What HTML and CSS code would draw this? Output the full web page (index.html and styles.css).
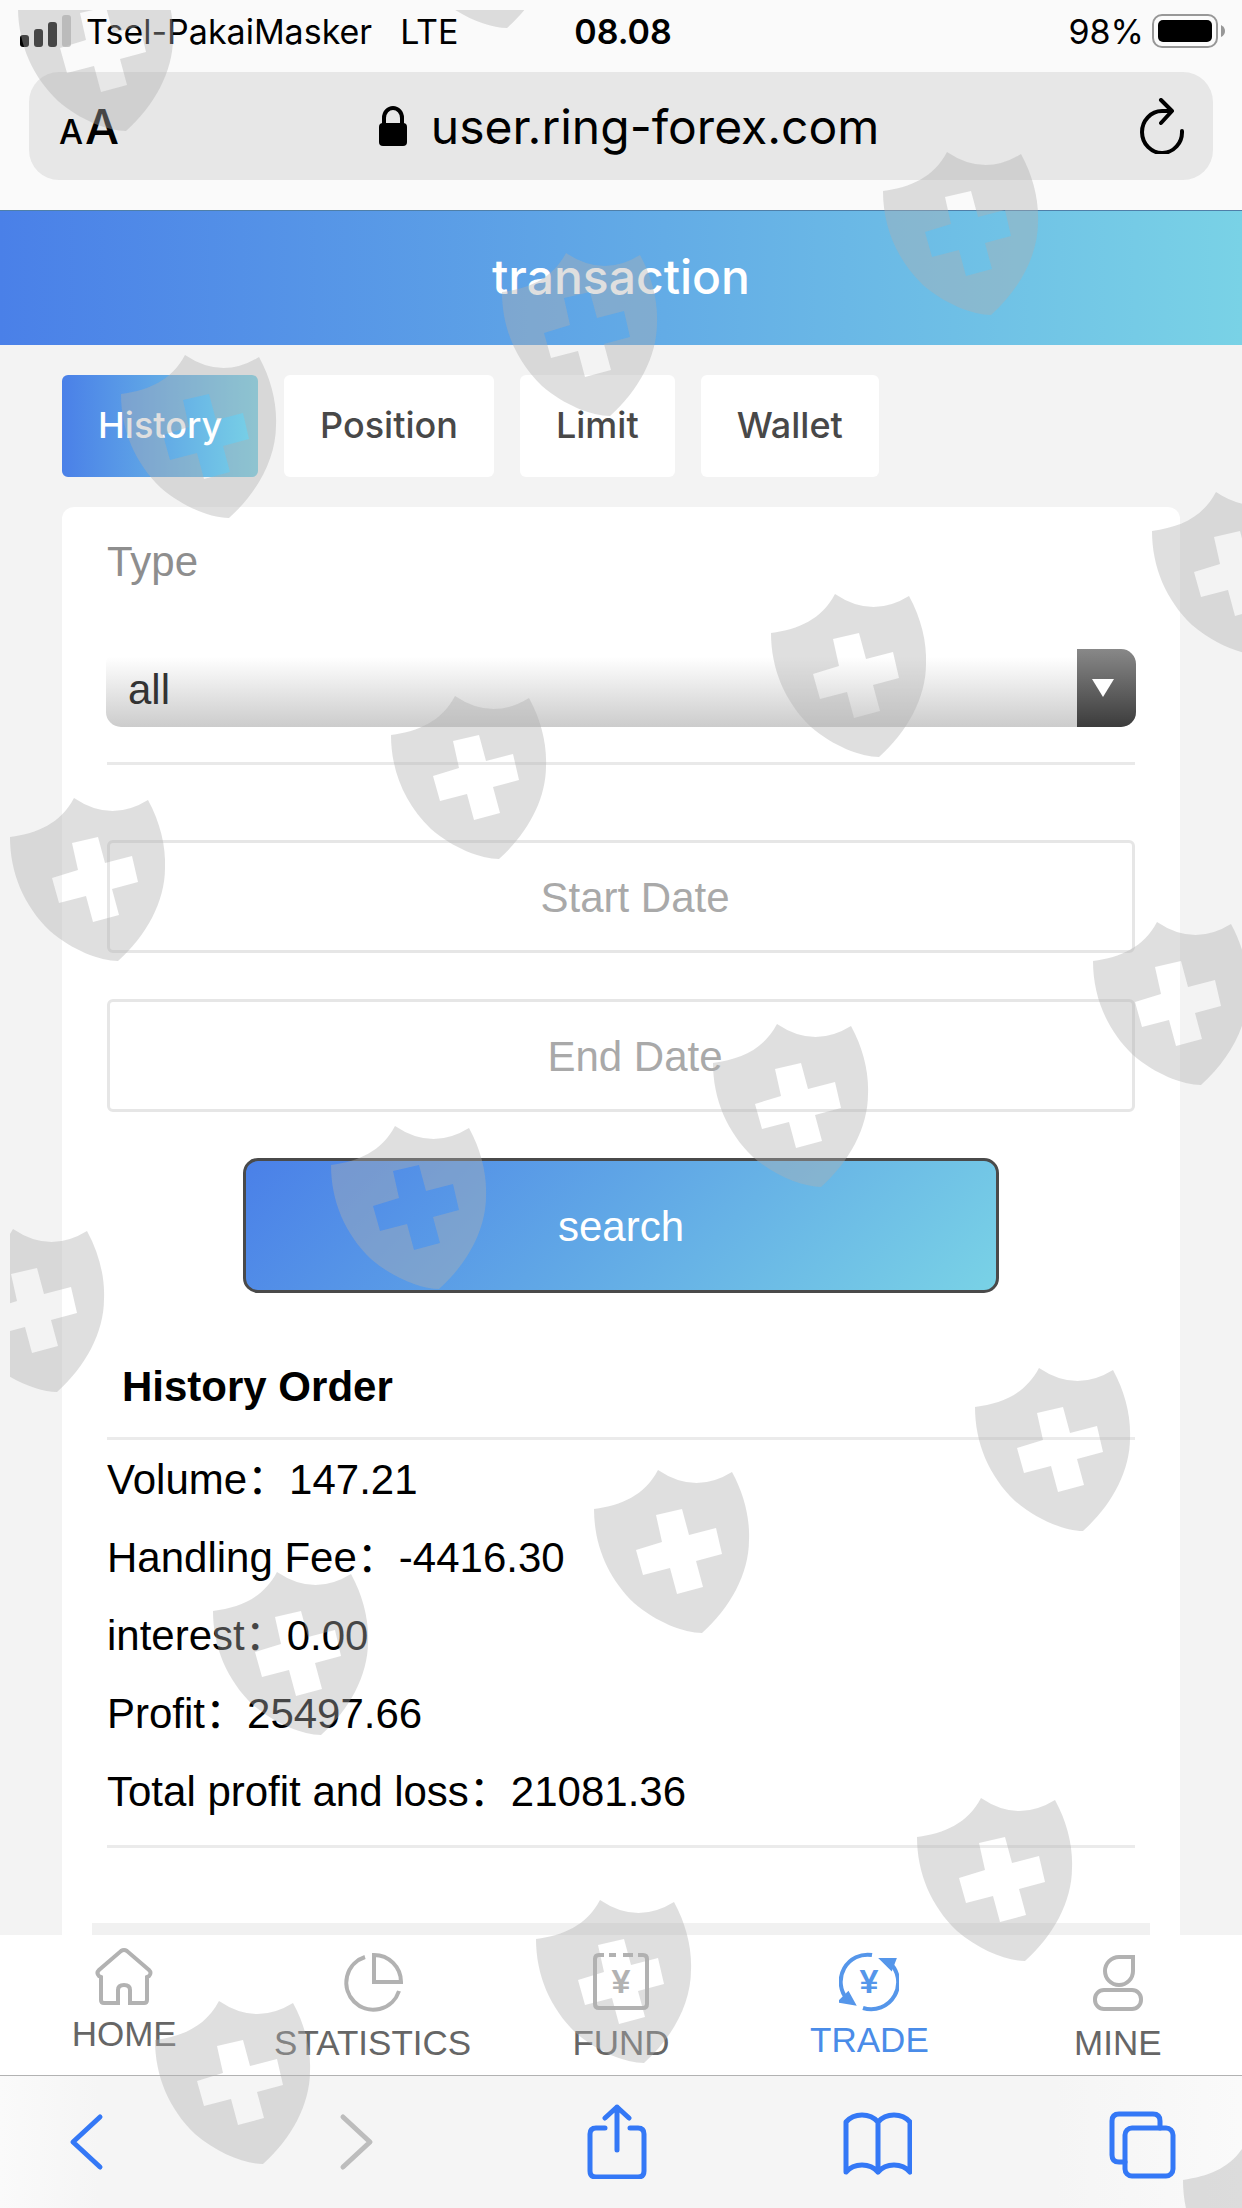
FILE: index.html
```html
<!DOCTYPE html>
<html lang="en">
<head>
    <meta charset="UTF-8">
    <meta name="viewport" content="width=device-width, initial-scale=1.0">
    <title>transaction</title>
    <link rel="stylesheet" href="styles.css">
</head>
<body>

    <header class="browser-top">
        <div class="status-bar">
            <div class="status-left">
                <svg class="signal" viewBox="0 0 52 32">
                    <rect x="0" y="20" width="9" height="12" rx="3"/>
                    <rect x="14" y="14" width="9" height="18" rx="3"/>
                    <rect x="28" y="7" width="9" height="25" rx="3"/>
                    <rect x="42" y="0" width="9" height="32" rx="3" fill="#c4c4c4"/>
                </svg>
                <span>Tsel-PakaiMasker</span>
                <span class="network">LTE</span>
            </div>
            <div class="status-time">08.08</div>
            <div class="status-right">
                <span>98%</span>
                <svg class="battery" viewBox="0 0 74 34">
                    <rect x="1" y="1" width="64" height="32" rx="9" fill="none" stroke="#979797" stroke-width="2"/>
                    <rect x="6" y="6" width="54" height="22" rx="5"/>
                    <path d="M69 11q4 2 4 6t-4 6z" fill="#979797"/>
                </svg>
            </div>
        </div>

        <div class="address-bar">
            <button class="text-size" aria-label="Text size"><span class="small-a">A</span><span>A</span></button>
            <div class="address">
                <svg class="lock" viewBox="0 0 28 40">
                    <rect x="0" y="17" width="28" height="23" rx="4"/>
                    <path d="M5 19V12a9 10 0 0 1 18 0v7" fill="none" stroke="#000" stroke-width="4"/>
                </svg>
                <span>user.ring-forex.com</span>
            </div>
            <button class="reload" aria-label="Reload">
                <svg viewBox="0 0 46 56">
                    <path d="M43 33A20 21 0 1 1 23 13h9M22 2l11 11-11 12" fill="none" stroke="#000" stroke-width="4" stroke-linecap="round" stroke-linejoin="round"/>
                </svg>
            </button>
        </div>
    </header>

    <h1 class="title">transaction</h1>

    <main class="content">
        <div class="tabs">
            <button class="tab active">History</button>
            <button class="tab">Position</button>
            <button class="tab">Limit</button>
            <button class="tab">Wallet</button>
        </div>

        <div class="card">
            <form class="filter" onsubmit="return false">
                <label class="type-label" for="type">Type</label>
                <div class="select-wrap">
                    <select id="type">
                        <option>all</option>
                    </select>
                    <span class="select-arrow"></span>
                </div>
                <input class="date" type="text" placeholder="Start Date" aria-label="Start Date">
                <input class="date" type="text" placeholder="End Date" aria-label="End Date">
                <button class="search-btn">search</button>
            </form>

            <h2 class="order-title">History Order</h2>
            <ul class="totals">
                <li>Volume：147.21</li>
                <li>Handling Fee：-4416.30</li>
                <li>interest：0.00</li>
                <li>Profit：25497.66</li>
                <li>Total profit and loss：21081.36</li>
            </ul>
            <div class="list-divider"></div>
        </div>
    </main>

    <nav class="menu">
        <a class="menu-item" href="#home">
            <svg class="home-icon" viewBox="0 0 60 60">
                <path d="M7 30v23q0 3 3 3h14V43q0-5 6-5t6 5v13h14q3 0 3-3V30l2-1q3-3 0-6L33 4q-3-2-6 0L5 23q-3 3 0 6z"/>
            </svg>
            <span>HOME</span>
        </a>
        <a class="menu-item" href="#statistics">
            <svg viewBox="0 0 60 69">
                <path d="M22 10A27 27 0 1 0 56 44M31 8v27h27A27 27 0 0 0 31 8z"/>
            </svg>
            <span>STATISTICS</span>
        </a>
        <a class="menu-item" href="#fund">
            <svg viewBox="0 0 60 69">
                <path d="M13 8H8q-4 0-4 4v45q0 4 4 4h44q4 0 4-4V12q0-4-4-4h-5M18 8h7M32 8h10"/>
                <text x="30" y="46">¥</text>
            </svg>
            <span>FUND</span>
        </a>
        <a class="menu-item current" href="#trade">
            <svg class="trade-icon" viewBox="0 0 60 66">
                <path d="M33 8A27 27 0 0 0 8 52M24 61A27 27 0 0 0 50 15"/>
                <path class="solid" d="M2 54l7-7 5 9zM44 13h11l-3 8z"/>
                <text x="30" y="46">¥</text>
            </svg>
            <span>TRADE</span>
        </a>
        <a class="menu-item" href="#mine">
            <svg viewBox="0 0 60 69">
                <path d="M31 10h14v14a14 14 0 1 1-14-14z"/>
                <rect x="7" y="43" width="46" height="19" rx="9"/>
            </svg>
            <span>MINE</span>
        </a>
    </nav>

    <div class="toolbar">
        <button aria-label="Back">
            <svg viewBox="0 0 70 76"><path d="M49 14L22 39l27 25"/></svg>
        </button>
        <button aria-label="Forward" disabled>
            <svg viewBox="0 0 70 76"><path d="M28 14l27 25-27 25"/></svg>
        </button>
        <button aria-label="Share">
            <svg viewBox="0 0 70 76"><path d="M26 25H17q-6 0-6 6v37q0 6 6 6h42q6 0 6-6V31q0-6-6-6h-8M38 47V4M26 15L38 4l12 11"/></svg>
        </button>
        <button aria-label="Bookmarks">
            <svg viewBox="0 0 70 76"><path d="M36 19q-6-7-16-7t-16 7v50q6-7 16-7t16 7q6-7 16-7t16 7V19q-6-7-16-7t-16 7v50"/></svg>
        </button>
        <button aria-label="Tabs">
            <svg viewBox="0 0 70 76"><rect x="19" y="25" width="48" height="48" rx="7"/><path d="M19 59h-6q-7 0-7-7V18q0-7 7-7h34q7 0 7 7v7"/></svg>
        </button>
    </div>

    <!-- watermark over the whole screen -->
    <svg class="watermark" viewBox="0 0 1242 2208" preserveAspectRatio="xMinYMin slice" aria-hidden="true">
        <defs>
            <path id="shield" fill-rule="evenodd" d="M64 0Q101 25 138 2C150 24 156 48 155 70C155 104 136 138 108 163C90 163 62 152 40 133C14 108 0 75 0 39C28 35 50 26 64 0zM62 45l6 27-26 8 7 25 27-7 7 26 26-7-7-26 26-7-6-26-27 7-7-26z"/>
            <clipPath id="area"><rect x="10" y="10" width="1232" height="2198"/></clipPath>
        </defs>
        <g clip-path="url(#area)">
            <use href="#shield" x="18" y="-32"/>
            <use href="#shield" x="399" y="-135"/>
            <use href="#shield" x="121" y="355"/>
            <use href="#shield" x="502" y="253"/>
            <use href="#shield" x="883" y="152"/>
            <use href="#shield" x="10" y="798"/>
            <use href="#shield" x="391" y="696"/>
            <use href="#shield" x="771" y="594"/>
            <use href="#shield" x="1152" y="492"/>
            <use href="#shield" x="-51" y="1229"/>
            <use href="#shield" x="331" y="1126"/>
            <use href="#shield" x="713" y="1024"/>
            <use href="#shield" x="1093" y="922"/>
            <use href="#shield" x="213" y="1572"/>
            <use href="#shield" x="594" y="1470"/>
            <use href="#shield" x="975" y="1368"/>
            <use href="#shield" x="155" y="2001"/>
            <use href="#shield" x="536" y="1900"/>
            <use href="#shield" x="917" y="1798"/>
            <use href="#shield" x="1183" y="2141"/>
        </g>
    </svg>

</body>
</html>
```

FILE: styles.css
```css
* {
    margin: 0;
    padding: 0;
    box-sizing: border-box;
}

body {
    display: flex;
    flex-direction: column;
    min-height: 100vh;
    background: #f3f3f3;
    color: #000;
    font-family: "Liberation Sans", "Noto Sans CJK SC", sans-serif;
    font-size: 42px;
}

button {
    border: none;
    background: none;
    font-family: inherit;
    cursor: pointer;
}

svg {
    display: block;
}

/* browser top */
.browser-top {
    padding-bottom: 30px;
    background: #fafafa;
    font-family: Inter, sans-serif;
}

.status-bar {
    display: grid;
    grid-template-columns: 1fr auto 1fr;
    align-items: center;
    height: 60px;
    padding: 2px 16px 0 20px;
    font-size: 34px;
}

.status-left,
.status-right {
    display: flex;
    align-items: center;
}

.status-right {
    justify-content: flex-end;
    gap: 8px;
}

.signal {
    width: 52px;
    height: 32px;
    margin-right: 14px;
}

.network {
    margin-left: 28px;
}

.status-time {
    font-weight: 600;
}

.battery {
    width: 74px;
    height: 34px;
}

.address-bar {
    display: flex;
    justify-content: space-between;
    align-items: center;
    height: 108px;
    margin: 12px 29px 0;
    padding: 0 28px 0 30px;
    border-radius: 30px;
    background: #e7e7e7;
}

.text-size {
    display: flex;
    align-items: baseline;
    gap: 2px;
    font-size: 48px;
    font-weight: 500;
}

.small-a {
    font-size: 34px;
}

.address {
    display: flex;
    align-items: center;
    gap: 24px;
    font-size: 48px;
}

.lock {
    width: 28px;
    height: 40px;
}

.reload svg {
    width: 46px;
    height: 56px;
}

/* page */
.title {
    height: 135px;
    border-top: 1px solid #4f7fa8;
    background: linear-gradient(90deg, #4a80e8, #5fa5e6 45%, #79d2e6);
    color: #fff;
    font-family: Inter, sans-serif;
    font-size: 48px;
    font-weight: 500;
    line-height: 132px;
    text-align: center;
}

.content {
    flex: 1;
    display: flex;
    flex-direction: column;
    padding: 30px 62px 0;
}

.tabs {
    display: flex;
    gap: 26px;
    margin-bottom: 30px;
}

.tab {
    height: 102px;
    padding: 0 36px 2px;
    border-radius: 6px;
    background: #fff;
    color: #484848;
    font-family: Inter, sans-serif;
    font-size: 36px;
    font-weight: 500;
}

.tab.active {
    background: linear-gradient(90deg, #4a80e8, #5fa5e6 45%, #79d2e6);
    color: #fff;
}

.card {
    flex: 1;
    padding: 30px 45px 0;
    border-radius: 12px 12px 0 0;
    background: #fff;
}

.filter {
    display: flex;
    flex-direction: column;
}

.type-label {
    color: #8e8e8e;
    line-height: 50px;
}

.select-wrap {
    position: relative;
    margin: 62px -1px 0;
    padding-bottom: 35px;
}

.select-wrap::after {
    content: "";
    position: absolute;
    right: 1px;
    bottom: -3px;
    left: 1px;
    height: 3px;
    background: #e9e9e9;
}

.select-wrap select {
    display: block;
    width: 100%;
    height: 78px;
    padding: 2px 22px 0;
    appearance: none;
    border: none;
    border-radius: 15px;
    background: linear-gradient(#fff 10%, #ccc);
    color: #333;
    font-family: inherit;
    font-size: 42px;
}

.select-arrow {
    position: absolute;
    top: 0;
    right: 0;
    display: flex;
    justify-content: center;
    align-items: center;
    width: 59px;
    height: 78px;
    padding-right: 8px;
    border-radius: 0 15px 15px 0;
    background: linear-gradient(#888, #3c3c3c);
    pointer-events: none;
}

.select-arrow::before {
    content: "";
    border: 11px solid transparent;
    border-top: 18px solid #fff;
    border-bottom: 0;
}

.date {
    width: 100%;
    height: 113px;
    margin-bottom: 46px;
    padding: 2px 0 0 28px;
    border: 3px solid #e6e6e6;
    border-radius: 6px;
    background: #fff;
    font-family: inherit;
    font-size: 42px;
    text-align: center;
}

.select-wrap + .date {
    margin-top: 78px;
}

.date::placeholder {
    color: #a9a9a9;
}

.search-btn {
    align-self: center;
    width: 756px;
    max-width: 100%;
    height: 135px;
    padding-top: 2px;
    border: 3px solid #4a4a4a;
    border-radius: 15px;
    background: linear-gradient(135deg, #4a80e8, #5fa5e6 45%, #79d2e6);
    color: #fff;
    font-size: 42px;
}

.order-title {
    margin-top: 69px;
    padding: 1px 15px 26px;
    border-bottom: 3px solid #ebebeb;
    font-size: 42px;
    line-height: 48px;
}

.totals {
    padding: 1px 0 14px;
    border-bottom: 3px solid #ebebeb;
    list-style: none;
    line-height: 78px;
}

.list-divider {
    height: 12px;
    margin: 75px -15px 0;
    background: #f1f1f1;
}

/* page menu */
.menu {
    display: flex;
    height: 140px;
    padding-top: 12px;
    background: #fff;
}

.menu-item {
    flex: 1;
    display: flex;
    flex-direction: column;
    align-items: center;
    color: #666;
    font-size: 35px;
    line-height: 42px;
    text-decoration: none;
}

.menu-item svg {
    width: 60px;
    height: 69px;
    margin-bottom: 6px;
    fill: none;
    stroke: #b2b2b2;
    stroke-width: 4;
}

.menu-item .home-icon {
    height: 60px;
}

.menu-item .trade-icon {
    height: 66px;
    stroke: #5596ea;
}

.menu-item text {
    fill: #b2b2b2;
    stroke: none;
    font-size: 34px;
    font-weight: bold;
    text-anchor: middle;
}

.menu-item.current {
    color: #4a8ce8;
}

.current text,
.current .solid {
    fill: #5596ea;
}

/* browser bottom */
.toolbar {
    display: flex;
    justify-content: space-between;
    height: 133px;
    padding: 27px 66px 0 51px;
    border-top: 1px solid #b2b2b2;
    background: linear-gradient(90deg, #fafafa, #f5f5f5 8%, #f5f5f5 85%, #fafafa);
}

.toolbar svg {
    width: 70px;
    height: 76px;
    fill: none;
    stroke: #3478f6;
    stroke-width: 5;
    stroke-linecap: round;
    stroke-linejoin: round;
}

.toolbar button {
    height: 76px;
}

.toolbar button:disabled svg {
    stroke: #bdbdbd;
}

.watermark {
    position: absolute;
    top: 0;
    left: 0;
    width: 100%;
    height: 100%;
    fill: rgba(175, 175, 175, 0.4);
    pointer-events: none;
}

.menu-item .solid,
.current text {
    fill: #5596ea;
}
```
